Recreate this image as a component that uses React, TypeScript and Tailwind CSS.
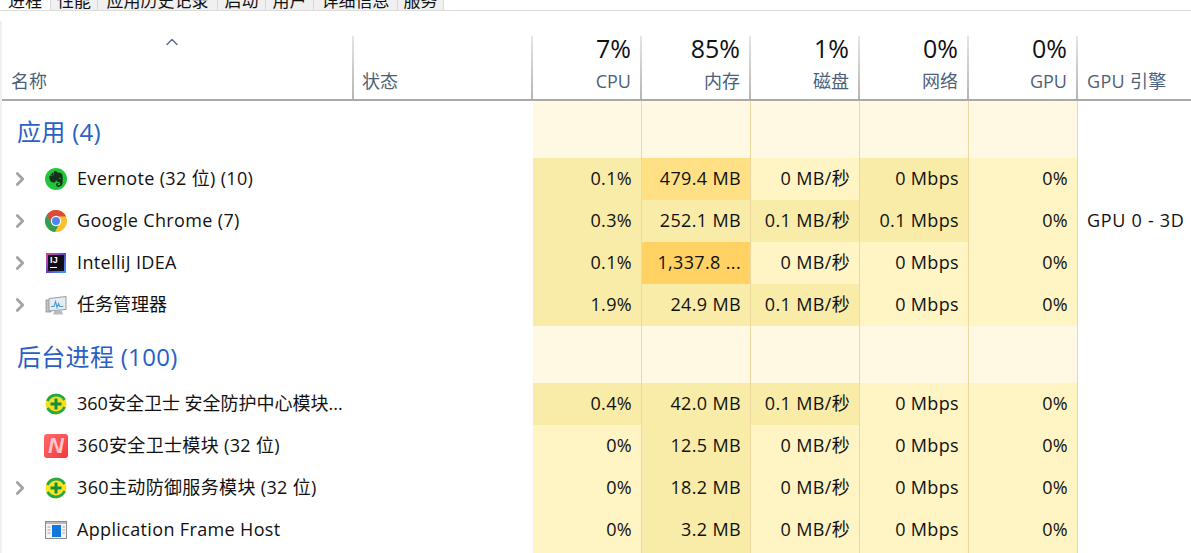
import { ChevronRight, ChevronUp } from "lucide-react";
import { FaEvernote } from "react-icons/fa";
import type { ReactNode } from "react";

const UI_FONT = "font-['Open_Sans','Noto_Sans_CJK_SC',sans-serif]";

const TABS = [
  { label: "进程", width: "w-[51px]", active: true },
  { label: "性能", width: "w-[47px]" },
  { label: "应用历史记录", width: "w-[120px]" },
  { label: "启动", width: "w-[48px]" },
  { label: "用户", width: "w-[48px]" },
  { label: "详细信息", width: "w-[84px]" },
  { label: "服务", width: "w-[46px]" },
];

const COLS = "grid grid-cols-[352px_179px_109px_109px_109px_109px_109px_112px]";

const HEAT: Record<string, string> = {
  l: "bg-[#fff4c4]",
  m: "bg-[#f9eca8]",
  h: "bg-[#ffe084]",
  x: "bg-[#ffd263]",
};

function Evernote() {
  return (
    <div className="flex h-[22px] w-[22px] items-center justify-center rounded-full bg-[#22c43c]">
      <FaEvernote size={18} className="text-[#16301a]" />
    </div>
  );
}

function Chrome() {
  return (
    <svg width="22" height="22" viewBox="0 0 22 22">
      <circle cx="11" cy="11" r="11" fill="#fbc02d" />
      <path d="M11 0A11 11 0 0 0 1.5 5.5L6.5 13 11 6.5H21A11 11 0 0 0 11 0Z" fill="#dc4a3d" />
      <path d="M1.5 5.5A11 11 0 0 0 10 22L14 14.5 7 13Z" fill="#2f9e56" />
      <circle cx="11" cy="11" r="5.2" fill="#fff" />
      <circle cx="11" cy="11" r="4" fill="#4d86ee" />
    </svg>
  );
}

function Idea() {
  return (
    <div className="flex h-5 w-5 bg-gradient-to-br from-[#f0308a] via-[#5b3fd6] to-[#1fa6f0] p-[2px]">
      <div className="flex h-full w-full flex-col bg-[#120c18] px-[2px] pt-[1px]">
        <span className="font-['Liberation_Sans',sans-serif] text-[9px] font-bold leading-[9px] text-white">IJ</span>
        <div className="mt-[2px] h-[1px] w-[7px] bg-white" />
      </div>
    </div>
  );
}

function TaskMgr() {
  return (
    <svg width="22" height="22" viewBox="0 0 22 22">
      <rect x="1" y="6" width="5" height="12" fill="#bfc4c8" stroke="#80868a" strokeWidth="0.7" />
      <path d="M4 4.500 21 2.500v13L4 17Z" fill="#e6ebf0" stroke="#969ca2" />
      <path d="M6 12.500h3l1.500-5 1.500 6 1.500-4 1.200 3h3.500" fill="none" stroke="#4a9bd8" strokeWidth="1.100" />
      <path d="M8 20.500h10l-1.500-4h-7Z" fill="#b9bdc0" />
    </svg>
  );
}

function Guard({ light }: { light?: boolean }) {
  return (
    <svg width="22" height="22" viewBox="0 0 22 22">
      <circle cx="11" cy="11" r="10.500" fill={light ? "#ffe31c" : "#fbdc1e"} />
      <path d="M2.500 8A9.500 9.500 0 0 1 19.500 7" fill="none" stroke="#22a94a" strokeWidth="2.800" />
      <path d="M19.500 14A9.500 9.500 0 0 1 2.500 15" fill="none" stroke="#22a94a" strokeWidth="2.800" />
      <path d="M9.500 5.500h3v4h4v3h-4v4h-3v-4h-4v-3h4Z" fill="#11913c" />
    </svg>
  );
}

function RedN() {
  return (
    <div className="flex h-6 w-6 items-center justify-center rounded-[3px] bg-gradient-to-br from-[#ff6a6a] to-[#f5333d]">
      <span className="font-['Liberation_Sans',sans-serif] text-[22px] font-bold italic leading-none text-[#ffc6c9]">N</span>
    </div>
  );
}

function AppFrame() {
  return (
    <svg width="22" height="18" viewBox="0 0 22 18">
      <rect x="0.500" y="0.500" width="21" height="17" fill="#f4f4f4" stroke="#8c8c8c" />
      <rect x="1" y="1" width="20" height="2" fill="#b9b9b9" />
      <rect x="7" y="4" width="9" height="12" fill="#0f78dc" />
      <path d="M2.500 6h3M2.500 9h3M2.500 12h3M17.500 6h2.500M17.500 9h2.500M17.500 12h2.500" stroke="#a5a5a5" />
    </svg>
  );
}

type Row = { name: string; icon?: ReactNode; expand?: boolean; tight?: boolean; vals: [string, string][]; engine?: string };

const APPS: Row[] = [
  { name: "Evernote (32 位) (10)", icon: <Evernote />, expand: true, vals: [["0.1%", "m"], ["479.4 MB", "h"], ["0 MB/秒", "l"], ["0 Mbps", "m"], ["0%", "l"]] },
  { name: "Google Chrome (7)", icon: <Chrome />, expand: true, vals: [["0.3%", "m"], ["252.1 MB", "m"], ["0.1 MB/秒", "m"], ["0.1 Mbps", "m"], ["0%", "l"]], engine: "GPU 0 - 3D" },
  { name: "IntelliJ IDEA", icon: <Idea />, expand: true, vals: [["0.1%", "m"], ["1,337.8 ...", "x"], ["0 MB/秒", "l"], ["0 Mbps", "l"], ["0%", "l"]] },
  { name: "任务管理器", icon: <TaskMgr />, expand: true, tight: true, vals: [["1.9%", "m"], ["24.9 MB", "m"], ["0.1 MB/秒", "m"], ["0 Mbps", "l"], ["0%", "l"]] },
];

const BACKGROUND: Row[] = [
  { name: "360安全卫士 安全防护中心模块...", icon: <Guard />, tight: true, vals: [["0.4%", "m"], ["42.0 MB", "m"], ["0.1 MB/秒", "m"], ["0 Mbps", "l"], ["0%", "l"]] },
  { name: "360安全卫士模块 (32 位)", icon: <RedN />, vals: [["0%", "l"], ["12.5 MB", "m"], ["0 MB/秒", "l"], ["0 Mbps", "l"], ["0%", "l"]] },
  { name: "360主动防御服务模块 (32 位)", icon: <Guard light />, expand: true, vals: [["0%", "l"], ["18.2 MB", "m"], ["0 MB/秒", "l"], ["0 Mbps", "l"], ["0%", "l"]] },
  { name: "Application Frame Host", icon: <AppFrame />, vals: [["0%", "l"], ["3.2 MB", "m"], ["0 MB/秒", "l"], ["0 Mbps", "l"], ["0%", "l"]] },
  { name: "", vals: [["", "l"], ["", "m"], ["", "l"], ["", "l"], ["", "l"]] },
];

const METRICS = [
  { pct: "7%", label: "CPU" },
  { pct: "85%", label: "内存" },
  { pct: "1%", label: "磁盘" },
  { pct: "0%", label: "网络" },
  { pct: "0%", label: "GPU" },
];

const DIVIDER = "border-r-2 [border-image:linear-gradient(#e6e6e6,#b4b4b4)_1]";

function GroupRow({ title }: { title: string }) {
  return (
    <div className={`${COLS} h-[57px]`}>
      <div className="col-span-2 whitespace-nowrap pl-[15px] pt-[13px] text-[24px] leading-[36px] tracking-[0.3px] text-[#2a5fc4]">{title}</div>
      {METRICS.map((m) => (
        <div key={m.label} className="border-r border-[#efd8a0] bg-[#fff8e2] first:border-l" />
      ))}
    </div>
  );
}

function ProcessRow({ row }: { row: Row }) {
  return (
    <div className={`${COLS} h-[42px] text-[18px] leading-[40px] tracking-[0.35px] text-[#111]`}>
      <div className="col-span-2 flex items-center">
        <div className="flex w-[42px] shrink-0 justify-start pl-[7px]">
          {row.expand && <ChevronRight size={22} strokeWidth={3} className="text-[#a3a3a3]" />}
        </div>
        <div className="flex w-[24px] shrink-0 justify-center">{row.icon}</div>
        <span className={`ml-[9px] -mt-[2px] whitespace-nowrap ${row.tight ? "tracking-normal" : ""}`}>{row.name}</span>
      </div>
      {row.vals.map(([v, h], i) => (
        <div key={i} className={`border-r border-[#efd8a0] pr-[9px] text-right first:border-l ${HEAT[h]}`}>
          <span className="whitespace-nowrap">{v}</span>
        </div>
      ))}
      <div className="whitespace-nowrap pl-[9px] tracking-[0.7px]">{row.engine}</div>
    </div>
  );
}

export default function App() {
  return (
    <div className={`h-[553px] w-[1191px] overflow-hidden bg-white ${UI_FONT}`}>
      <div className="flex h-[11px] items-end border-b border-[#dcdcdc]">
        {TABS.map((t) => (
          <div
            key={t.label}
            className={`flex h-[11px] justify-center overflow-hidden border-r border-[#d9d9d9] text-[17px] leading-[4px] text-[#111] ${t.width} ${t.active ? "bg-white" : "bg-[#f0f0f0]"}`}
          >
            {t.label}
          </div>
        ))}
      </div>
      <div className="mt-[10px] h-[532px] border-l-2 border-[#f0f0f0] pt-[15px]">
        <div className={`${COLS} h-[65px] border-b-2 border-[#a9a9a9]`}>
          <div className={`flex flex-col items-center ${DIVIDER}`}>
            <ChevronUp size={20} strokeWidth={1.8} className="-ml-[10px] mt-[-4px] text-[#5f6e88]" />
            <div className="mt-[16px] w-full pl-[9px] text-[18px] leading-[26px] text-[#4d5f78]">名称</div>
          </div>
          <div className={`flex items-end pb-[5px] pl-[8px] text-[18px] leading-[26px] text-[#4d5f78] ${DIVIDER}`}>状态</div>
          {METRICS.map((m) => (
            <div key={m.label} className={`flex flex-col items-end pr-[9px] ${DIVIDER}`}>
              <div className="mt-[-3px] text-[25px] leading-[30px] text-[#111]">{m.pct}</div>
              <div className="mt-[5px] text-[18px] leading-[26px] text-[#4d5f78]">{m.label}</div>
            </div>
          ))}
          <div className="flex items-end whitespace-nowrap pb-[5px] pl-[9px] text-[18px] leading-[26px] tracking-[0.3px] text-[#4d5f78]">GPU 引擎</div>
        </div>
        <GroupRow title="应用 (4)" />
        {APPS.map((r) => (
          <ProcessRow key={r.name} row={r} />
        ))}
        <GroupRow title="后台进程 (100)" />
        {BACKGROUND.map((r) => (
          <ProcessRow key={r.name || "next"} row={r} />
        ))}
      </div>
    </div>
  );
}
